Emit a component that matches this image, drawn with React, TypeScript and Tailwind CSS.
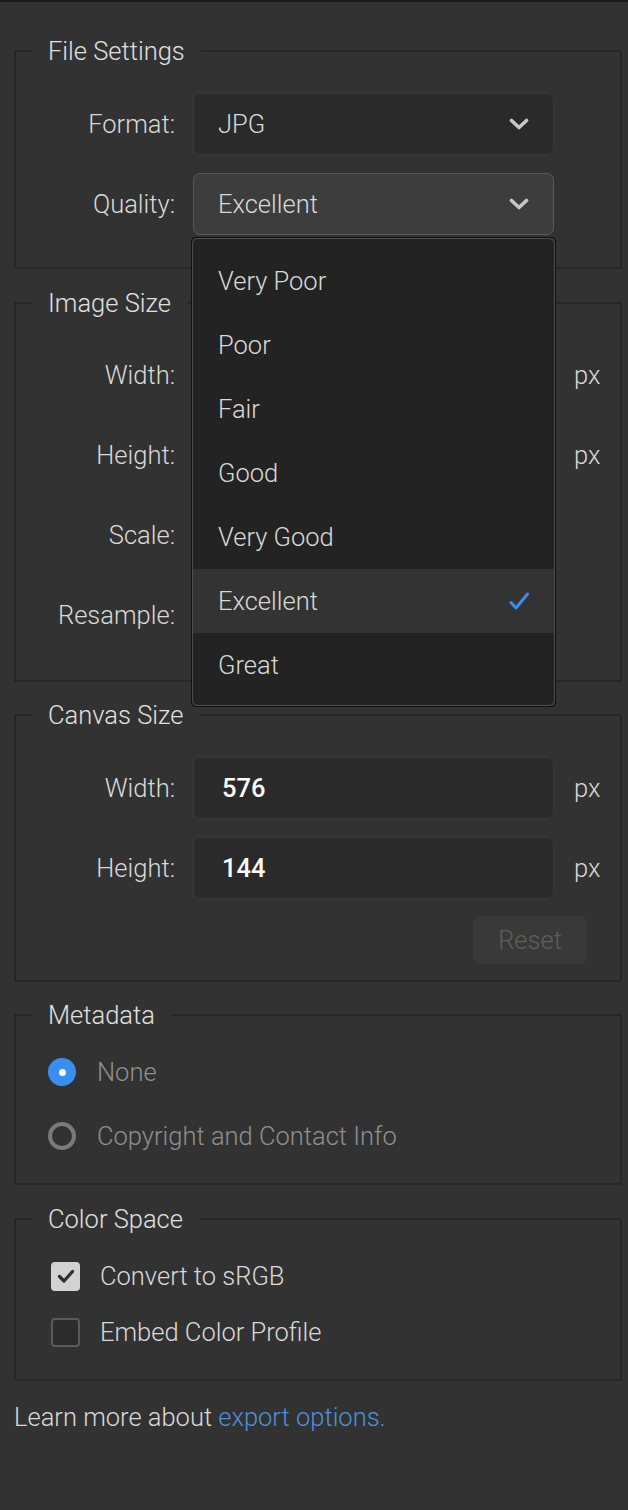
import React from 'react';

const QUALITIES = ['Very Poor', 'Poor', 'Fair', 'Good', 'Very Good', 'Excellent', 'Great'];

function Chevron() {
  return (
    <svg width="20" height="12" viewBox="0 0 20 12" className="shrink-0">
      <path d="M2.5 2.5l7.5 7 7.5-7" fill="none" stroke="#c8c8c8" strokeWidth="3.6" strokeLinecap="round" strokeLinejoin="round" />
    </svg>
  );
}

function Select({ value, active }: { value?: string; active?: boolean }) {
  return (
    <div
      className={`flex h-[62px] w-[361px] items-center justify-between rounded-[7px] border-[1.5px] pl-[24px] pr-[24px] ${
        active ? 'border-[#585858] bg-[#3d3d3d]' : 'border-[#383838] bg-[#2a2a2a]'
      }`}
    >
      <span>{value}</span>
      <Chevron />
    </div>
  );
}

function NumberInput({ value }: { value?: string }) {
  return (
    <div className="flex h-[62px] w-[361px] items-center rounded-[7px] border-[1.5px] border-[#383838] bg-[#2a2a2a] pl-[28px] font-medium text-white">
      {value}
    </div>
  );
}

function Row({ label, children, unit }: { label: string; children: React.ReactNode; unit?: boolean }) {
  return (
    <div className="flex h-[62px] items-center">
      <div className="w-[159px] text-right">{label}</div>
      <div className="ml-[18px]">{children}</div>
      {unit && <span className="ml-[20px]">px</span>}
    </div>
  );
}

function Group({ title, className, children }: { title: string; className?: string; children: React.ReactNode }) {
  return (
    <fieldset className={`border-2 border-[#272727] ${className ?? ''}`}>
      <legend className="ml-[16px] px-4 leading-[30px] text-[#e0e0e0]">{title}</legend>
      {children}
    </fieldset>
  );
}

function Dropdown() {
  return (
    <div className="absolute left-[-2px] top-full z-10 mt-[2px] w-[365px] rounded-[4px] border border-[#0f0f0f]">
      <div className="rounded-[6px] border-[1.5px] border-[#4e4e4e] bg-[#232323] pb-[8px] pt-[10px]">
        {QUALITIES.map((q) => (
          <div
            key={q}
            className={`flex h-[64px] items-center justify-between pl-[25px] pr-[25px] ${q === 'Excellent' ? 'bg-[#333333]' : ''}`}
          >
            <span>{q}</span>
            {q === 'Excellent' && (
              <svg width="20" height="18" viewBox="0 0 20 18">
                <path d="M2 10.5l5 5.5L18.5 2" fill="none" stroke="#3a8ef0" strokeWidth="3" strokeLinecap="round" strokeLinejoin="round" />
              </svg>
            )}
          </div>
        ))}
      </div>
    </div>
  );
}

export default function App() {
  return (
    <div className="min-h-[1510px] border-t-2 border-[#1b1b1b] bg-[#323232] pl-[14px] pr-[6px] pt-[34px] font-[Roboto,sans-serif] text-[25.5px] font-light text-[#d9d9d9]">
      <Group title="File Settings" className="pb-[32px] pt-[27px]">
        <div className="flex flex-col gap-[18px]">
          <Row label="Format:">
            <Select value="JPG" />
          </Row>
          <Row label="Quality:">
            <div className="relative">
              <Select value="Excellent" active />
              <Dropdown />
            </div>
          </Row>
        </div>
      </Group>

      {/* the open quality menu covers the fields of this group */}
      <Group title="Image Size" className="mt-[19px] pb-[34px] pt-[26px]">
        <div className="flex flex-col gap-[18px]">
          <Row label="Width:" unit>
            <NumberInput />
          </Row>
          <Row label="Height:" unit>
            <NumberInput />
          </Row>
          <Row label="Scale:">
            <Select />
          </Row>
          <Row label="Resample:">
            <Select />
          </Row>
        </div>
      </Group>

      <Group title="Canvas Size" className="mt-[18px] pb-[16px] pt-[27px]">
        <div className="flex flex-col gap-[18px]">
          <Row label="Width:" unit>
            <NumberInput value="576" />
          </Row>
          <Row label="Height:" unit>
            <NumberInput value="144" />
          </Row>
        </div>
        <div className="mt-[17px] flex justify-end pr-[33px]">
          <button className="h-[48px] w-[114px] rounded-[8px] bg-[#393939] text-[#5e5e5e]">Reset</button>
        </div>
      </Group>

      <Group title="Metadata" className="mt-[18px] pb-[15px] pt-[10px]">
        <div className="flex h-[64px] items-center pl-[32px]">
          <span className="flex h-[28px] w-[28px] items-center justify-center rounded-full bg-[#3a8ef0]">
            <span className="h-[7px] w-[7px] rounded-full bg-white" />
          </span>
          <span className="ml-[21px] text-[#8f8f8f]">None</span>
        </div>
        <div className="flex h-[64px] items-center pl-[32px]">
          <span className="h-[28px] w-[28px] rounded-full border-[4px] border-[#7a7a7a]" />
          <span className="ml-[21px] text-[#8f8f8f]">Copyright and Contact Info</span>
        </div>
      </Group>

      <Group title="Color Space" className="mt-[19px] pb-[19px] pt-[14px]">
        <div className="flex h-[56px] items-center pl-[35px]">
          <span className="flex h-[29px] w-[29px] items-center justify-center rounded-[4px] bg-[#d2d2d2]">
            <svg width="18" height="14" viewBox="0 0 18 14">
              <path d="M2.5 7.5l4.5 4.5 8.5-9.5" fill="none" stroke="#2e2e2e" strokeWidth="3.2" strokeLinecap="round" strokeLinejoin="round" />
            </svg>
          </span>
          <span className="ml-[20px]">Convert to sRGB</span>
        </div>
        <div className="flex h-[56px] items-center pl-[35px]">
          <span className="h-[29px] w-[29px] rounded-[4px] border-2 border-[#5a5a5a] bg-[#2c2c2c]" />
          <span className="ml-[20px]">Embed Color Profile</span>
        </div>
      </Group>

      <p className="mt-[21px] leading-[30px]">
        Learn more about <a className="text-[#4d90dc]">export options.</a>
      </p>
    </div>
  );
}
